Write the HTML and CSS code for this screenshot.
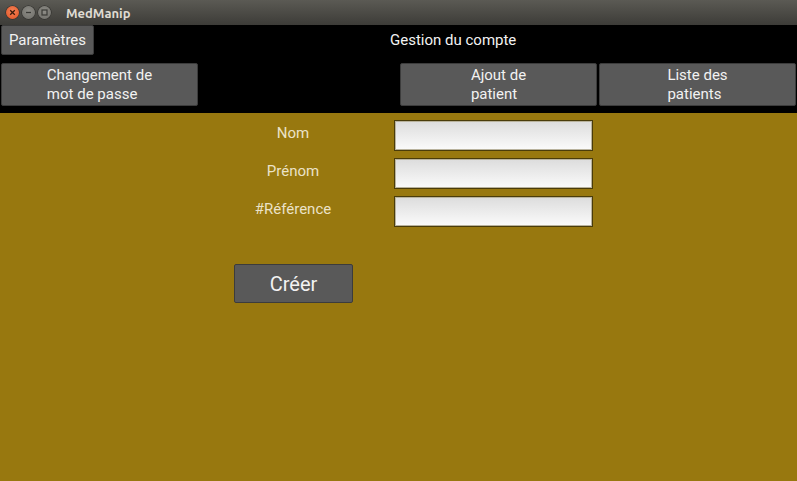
FILE: index.html
```html
<!DOCTYPE html>
<html>
<head>
<meta charset="utf-8">
<link rel="stylesheet" href="styles.css">
</head>
<body>
<div class="window">
  <div class="titlebar">
    <div class="controls">
      <span class="ctl close">
        <svg width="13" height="13" viewBox="0 0 13 13"><path d="M4.2 4.2 L8.8 8.8 M8.8 4.2 L4.2 8.8" stroke="#3a1a0a" stroke-width="1.3"/></svg>
      </span>
      <span class="ctl min">
        <svg width="13" height="13" viewBox="0 0 13 13"><path d="M4 6.5 H9" stroke="#3a3a36" stroke-width="1.3"/></svg>
      </span>
      <span class="ctl max">
        <svg width="13" height="13" viewBox="0 0 13 13"><rect x="4" y="4" width="5" height="5" fill="none" stroke="#3a3a36" stroke-width="1.2"/></svg>
      </span>
    </div>
    <span class="app-title">MedManip</span>
  </div>
  <div class="header">
    <div class="top-row">
      <button class="btn params">Paramètres</button>
      <span class="page-title">Gestion du compte</span>
    </div>
    <div class="nav-row">
      <button class="btn nav"><span class="nav-text">Changement de<br>mot de passe</span></button>
      <button class="btn nav push"><span class="nav-text">Ajout de<br>patient</span></button>
      <button class="btn nav"><span class="nav-text">Liste des<br>patients</span></button>
    </div>
  </div>
  <div class="content">
    <div class="form">
      <label class="lbl">Nom</label>
      <input class="field" type="text">
      <label class="lbl">Prénom</label>
      <input class="field" type="text">
      <label class="lbl">#Référence</label>
      <input class="field" type="text">
    </div>
    <button class="btn create">Créer</button>
  </div>
</div>
</body>
</html>
```
FILE: styles.css
```css
html, body {
  margin: 0;
  padding: 0;
}
body {
  font-family: Roboto, "Liberation Sans", sans-serif;
  background: #98780f;
}
.window {
  width: 797px;
  height: 481px;
  display: flex;
  flex-direction: column;
  overflow: hidden;
}
.titlebar {
  height: 25px;
  flex: none;
  background: linear-gradient(#5b5a54, #3d3c38);
  display: flex;
  align-items: center;
  box-sizing: border-box;
  padding-left: 6px;
}
.controls {
  display: flex;
  gap: 3px;
}
.ctl {
  width: 13px;
  height: 13px;
  border-radius: 50%;
  display: flex;
  box-shadow: 0 0 0 0.5px #2a2a27;
}
.close {
  background: radial-gradient(circle at 50% 40%, #f5845a, #e0501f);
}
.min, .max {
  background: radial-gradient(circle at 50% 40%, #8d8c86, #6e6d68);
}
.app-title {
  margin-left: 15px;
  color: #dfdbd2;
  font-family: Ubuntu, "DejaVu Sans", sans-serif;
  font-weight: bold;
  font-size: 13px;
}
.header {
  background: #000;
  height: 88px;
  flex: none;
  display: flex;
  flex-direction: column;
}
.top-row {
  display: flex;
  align-items: center;
  height: 30px;
}
.btn {
  background: #595959;
  color: #f2f2f2;
  border: 1px solid #3c3c3c;
  border-radius: 2px;
  font-family: Roboto, "Liberation Sans", sans-serif;
  padding: 0;
  margin: 0;
  box-sizing: border-box;
}
.params {
  margin-left: 1px;
  width: 93px;
  height: 30px;
  font-size: 15px;
}
.page-title {
  margin-left: 296px;
  color: #f2f2f2;
  font-size: 15px;
}
.nav-row {
  display: flex;
  margin-top: 8px;
  gap: 2px;
  padding: 0 1px;
}
.nav {
  width: 197px;
  height: 43px;
  font-size: 15px;
  line-height: 19px;
  text-align: center;
}
.nav-text {
  display: inline-block;
  text-align: left;
}
.push {
  margin-left: auto;
}
.content {
  flex: 1;
  background: #98780f;
  padding-top: 7px;
}
.form {
  margin-left: 192px;
  display: grid;
  grid-template-columns: 202px 199px;
  grid-auto-rows: 31px;
  row-gap: 7px;
  align-items: center;
}
.lbl {
  text-align: center;
  color: #ebe2c8;
  font-size: 15px;
  margin-top: -6px;
}
.field {
  height: 31px;
  width: 199px;
  box-sizing: border-box;
  border: 1px solid #4a3c0a;
  box-shadow: inset 0 0 0 1px #b9b39e;
  background: linear-gradient(#dcdcdc, #fbfbfb);
  margin: 0;
}
.create {
  margin-top: 37px;
  margin-left: 234px;
  width: 119px;
  height: 39px;
  font-size: 20px;
}
```
